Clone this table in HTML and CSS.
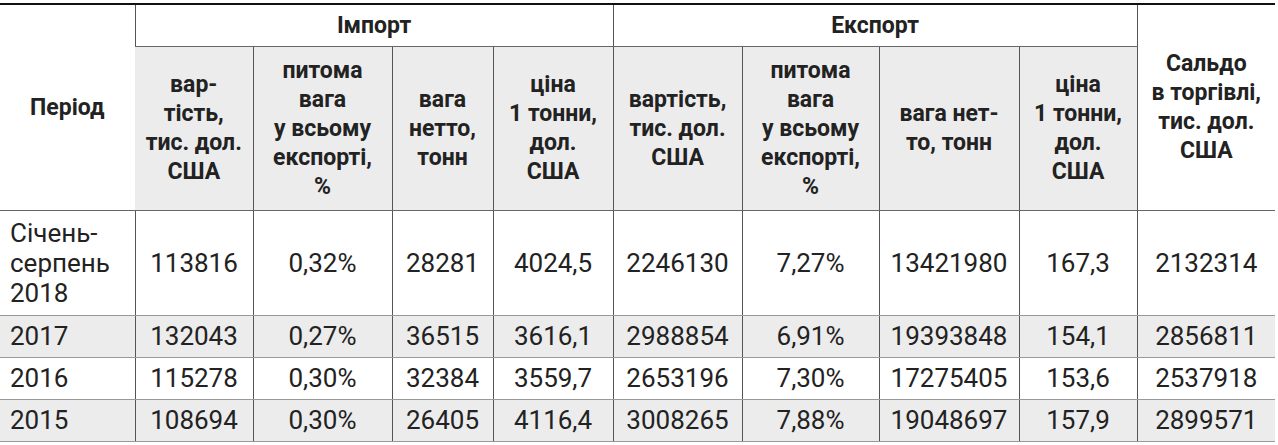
FILE: index.html
```
<!DOCTYPE html>
<html lang="uk">
<head>
    <meta charset="UTF-8">
    <meta name="viewport" content="width=device-width, initial-scale=1.0">
    <title>Імпорт та експорт</title>
    <link rel="stylesheet" href="styles.css">
</head>
<body>
    <table class="trade">
        <colgroup>
            <col class="c-period">
            <col class="c1"><col class="c2"><col class="c3"><col class="c4">
            <col class="c5"><col class="c6"><col class="c7"><col class="c8">
            <col class="c-saldo">
        </colgroup>
        <thead>
            <tr class="head-top">
                <th rowspan="2" class="plain">Період</th>
                <th colspan="4" class="plain">Імпорт</th>
                <th colspan="4" class="plain">Експорт</th>
                <th rowspan="2" class="plain">Сальдо<br>в торгівлі,<br>тис. дол.<br>США</th>
            </tr>
            <tr class="head-sub">
                <th>вар-<br>тість,<br>тис. дол.<br>США</th>
                <th>питома<br>вага<br>у всьому<br>експорті,<br>%</th>
                <th>вага<br>нетто,<br>тонн</th>
                <th>ціна<br>1 тонни,<br>дол.<br>США</th>
                <th>вартість,<br>тис. дол.<br>США</th>
                <th>питома<br>вага<br>у всьому<br>експорті,<br>%</th>
                <th>вага нет-<br>то, тонн</th>
                <th>ціна<br>1 тонни,<br>дол.<br>США</th>
            </tr>
        </thead>
        <tbody>
            <tr class="tall">
                <td class="period">Січень-<br>серпень<br>2018</td>
                <td>113816</td><td>0,32%</td><td>28281</td><td>4024,5</td>
                <td>2246130</td><td>7,27%</td><td>13421980</td><td>167,3</td>
                <td>2132314</td>
            </tr>
            <tr class="shade">
                <td class="period">2017</td>
                <td>132043</td><td>0,27%</td><td>36515</td><td>3616,1</td>
                <td>2988854</td><td>6,91%</td><td>19393848</td><td>154,1</td>
                <td>2856811</td>
            </tr>
            <tr>
                <td class="period">2016</td>
                <td>115278</td><td>0,30%</td><td>32384</td><td>3559,7</td>
                <td>2653196</td><td>7,30%</td><td>17275405</td><td>153,6</td>
                <td>2537918</td>
            </tr>
            <tr class="shade">
                <td class="period">2015</td>
                <td>108694</td><td>0,30%</td><td>26405</td><td>4116,4</td>
                <td>3008265</td><td>7,88%</td><td>19048697</td><td>157,9</td>
                <td>2899571</td>
            </tr>
        </tbody>
    </table>
</body>
</html>
```

FILE: styles.css
```
body {
    margin: 0;
    padding-top: 3px;
    background: #fff;
    font-family: Roboto, "Liberation Sans", sans-serif;
    color: #222;
}

.trade {
    width: 1275px;
    table-layout: fixed;
    border-collapse: collapse;
    border-top: 2px solid #111;
}

/* ширини колонок */
.c-period { width: 135px; }
.c1 { width: 118px; }
.c2 { width: 139px; }
.c3 { width: 101px; }
.c4 { width: 120px; }
.c5 { width: 129px; }
.c6 { width: 137px; }
.c7 { width: 140px; }
.c8 { width: 118px; }
.c-saldo { width: 138px; }

.trade th,
.trade td {
    padding: 0 2px;
    text-align: center;
    vertical-align: middle;
    border-left: 1px solid #555;
    border-bottom: 1px solid #999;
}
.trade th:first-child,
.trade td:first-child {
    border-left: none;
}

.trade th {
    font-size: 23px;
    font-weight: 700;
    line-height: 29px;
    background: #ececec;
    border-bottom-color: #666;
}
.trade th.plain {
    background: #fff;
}

.head-top { height: 42px; }
.head-sub { height: 164px; }

.trade td {
    font-size: 26px;
    line-height: 30px;
    height: 41px;
}
.trade td.period {
    text-align: left;
    padding-left: 10px;
}
.trade tr.tall td { height: 104px; }
.trade tr.shade td { background: #ececec; }
```
